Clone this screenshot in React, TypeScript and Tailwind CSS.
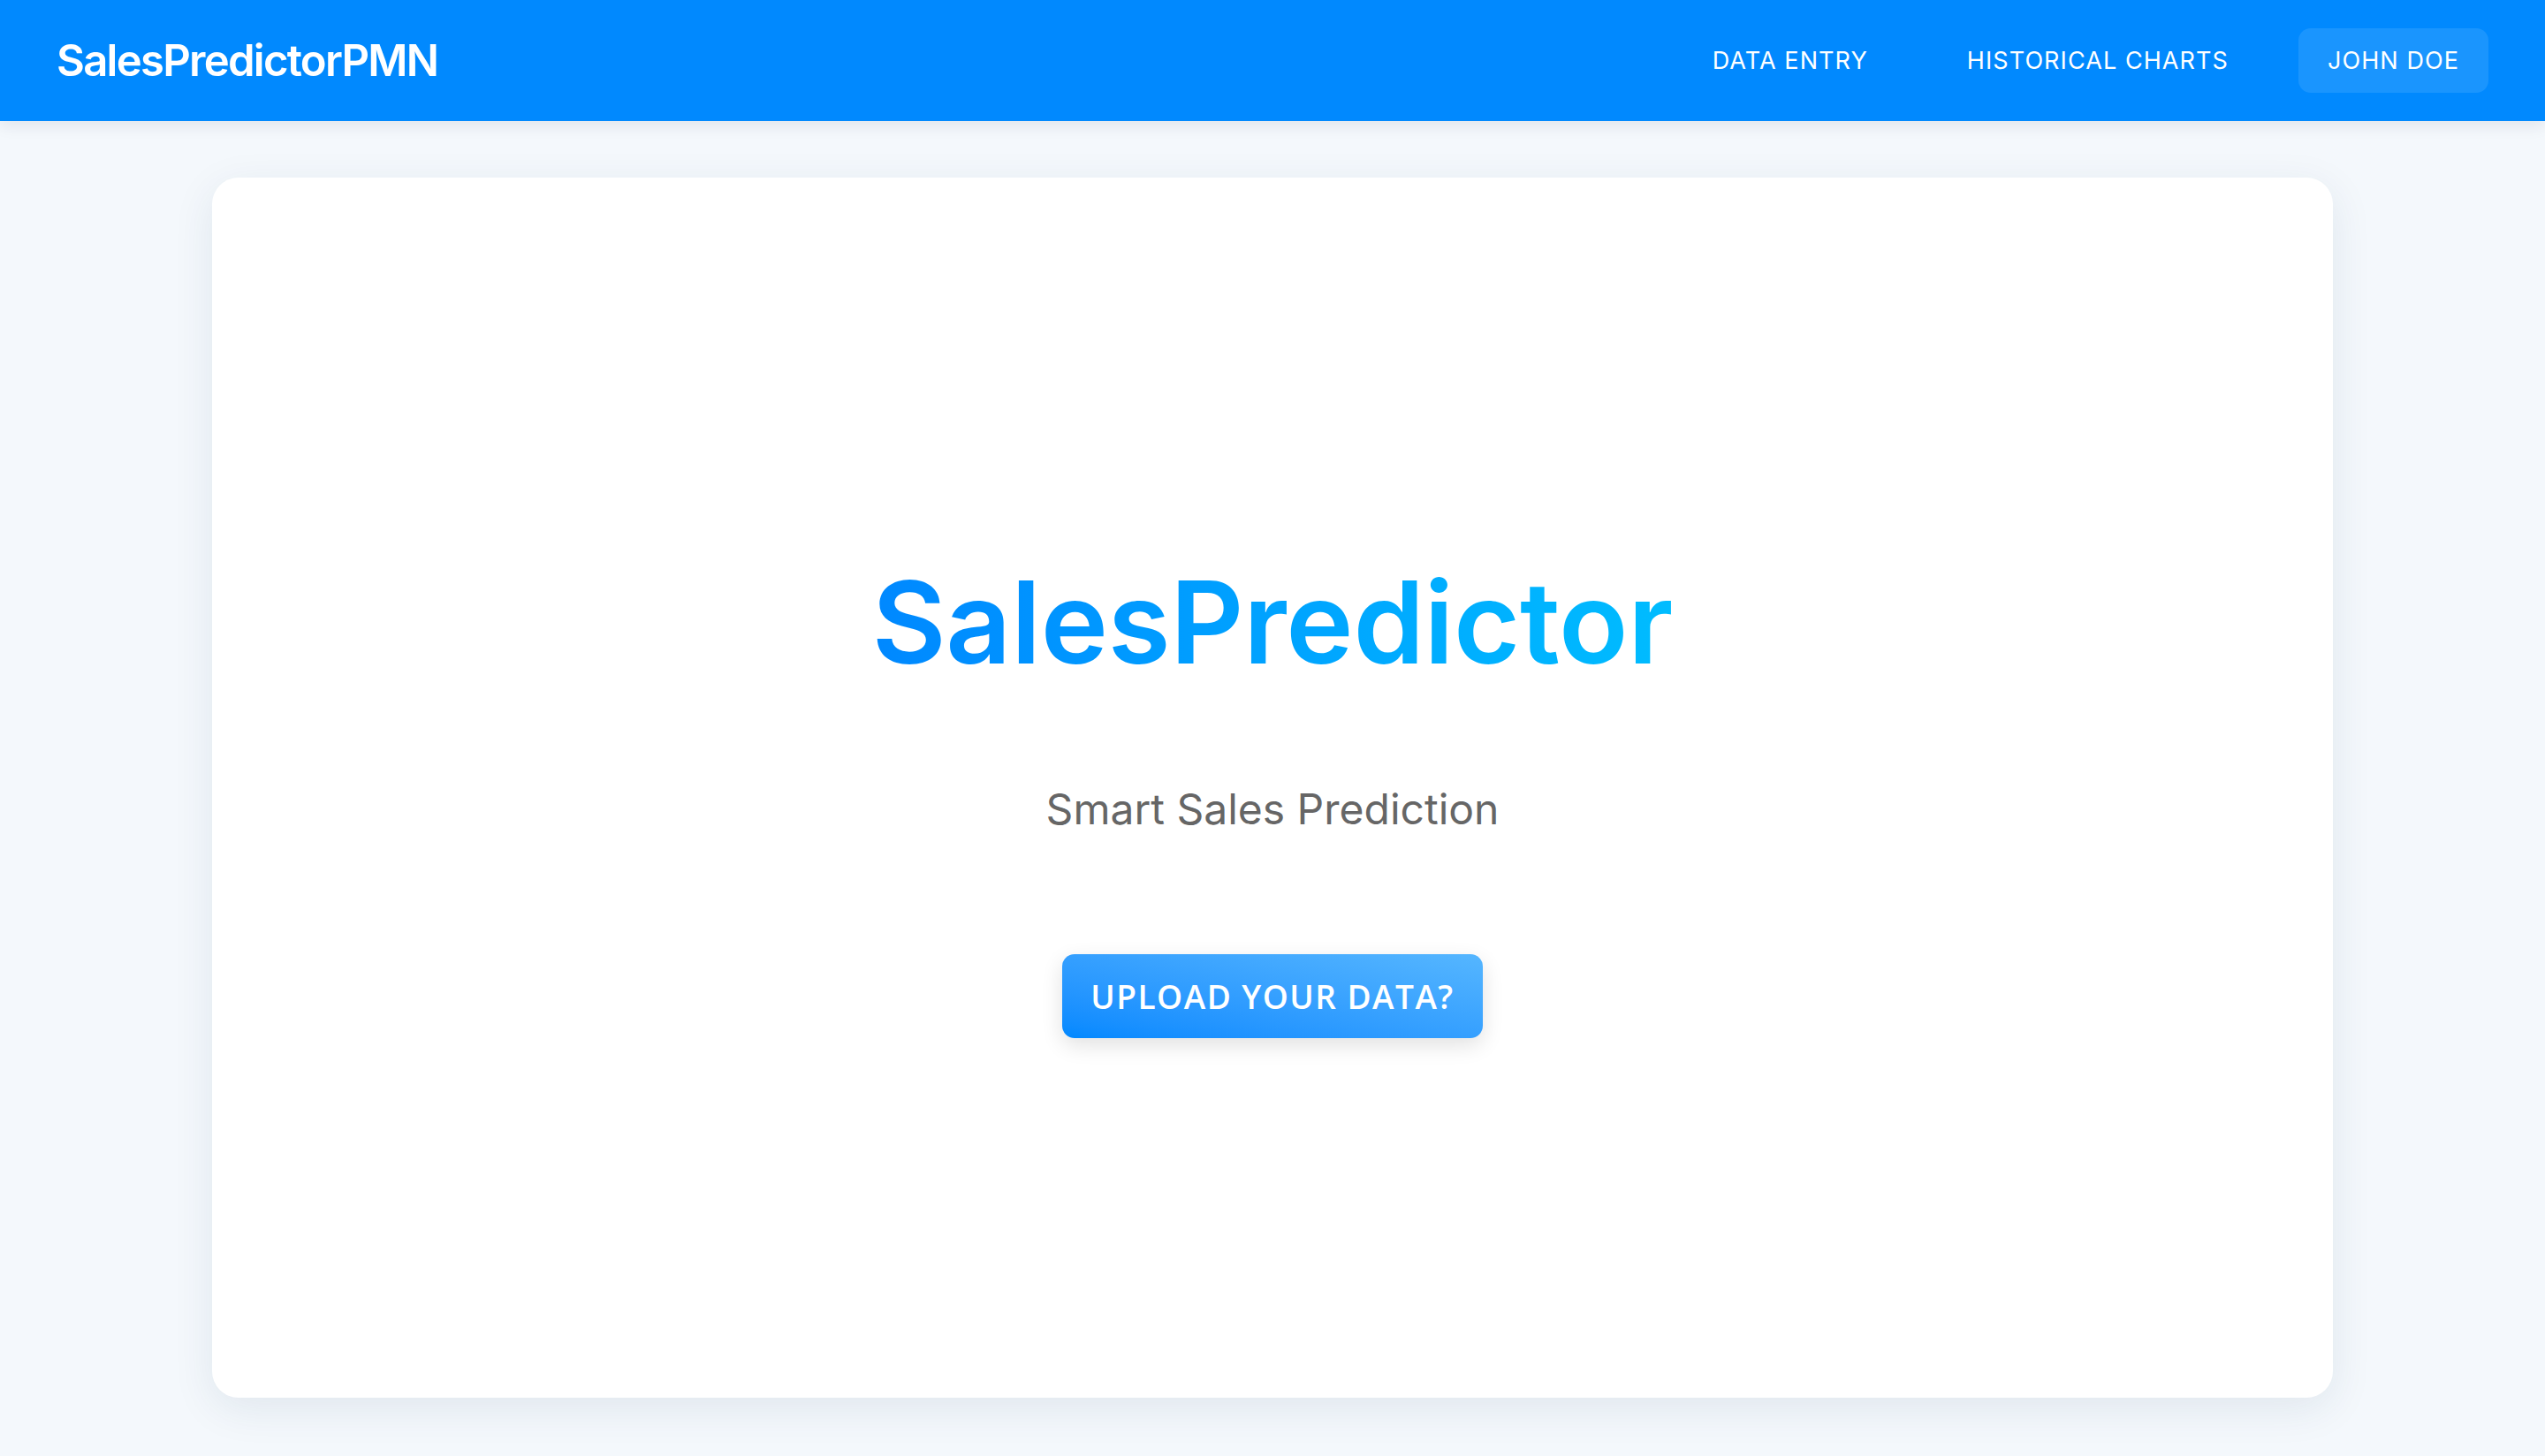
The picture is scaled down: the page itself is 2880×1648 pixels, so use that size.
export default function App() {
  return (
    <div className="flex h-screen flex-col overflow-hidden bg-[#f4f8fc] font-['Inter',sans-serif]">
      <header className="relative z-10 flex h-[137px] shrink-0 items-center justify-between bg-[#0189fe] px-16 shadow-[0_6px_16px_rgba(0,30,60,0.08)]">
        <div className="text-[49px] font-semibold leading-none tracking-[-0.035em] text-white">SalesPredictorPMN</div>
        <nav className="flex items-center gap-[46px]">
          <a className="px-[33px] text-[27px] leading-none tracking-[0.04em] text-white">DATA ENTRY</a>
          <a className="px-[33px] text-[27px] leading-none tracking-[0.04em] text-white">HISTORICAL CHARTS</a>
          <button className="flex h-[73px] items-center rounded-[14px] bg-white/10 px-[33px] text-[27px] leading-none tracking-[0.04em] text-white">JOHN DOE</button>
        </nav>
      </header>
      <main className="flex flex-1 flex-col px-[240px] pt-16 pb-[66px]">
        <div className="flex flex-1 flex-col items-center justify-center rounded-[30px] bg-white pt-8 shadow-[0_12px_48px_rgba(20,50,90,0.09)]">
          <h1 className="bg-linear-to-r from-[#0088ff] to-[#00bcff] bg-clip-text text-[129px] font-semibold leading-none tracking-[-0.002em] text-transparent">SalesPredictor</h1>
          <p className="mt-[123px] text-[48px] leading-none text-[#666666]">Smart Sales Prediction</p>
          <button className="mt-[140px] flex h-[95px] items-center rounded-[14px] bg-linear-to-tr from-[#0088ff] to-[#55b6ff] px-8 font-['Open_Sans',sans-serif] text-[37px] font-semibold leading-none tracking-[0.04em] text-white shadow-[0_8px_24px_rgba(0,0,0,0.12)]">UPLOAD YOUR DATA?</button>
        </div>
      </main>
    </div>
  );
}
